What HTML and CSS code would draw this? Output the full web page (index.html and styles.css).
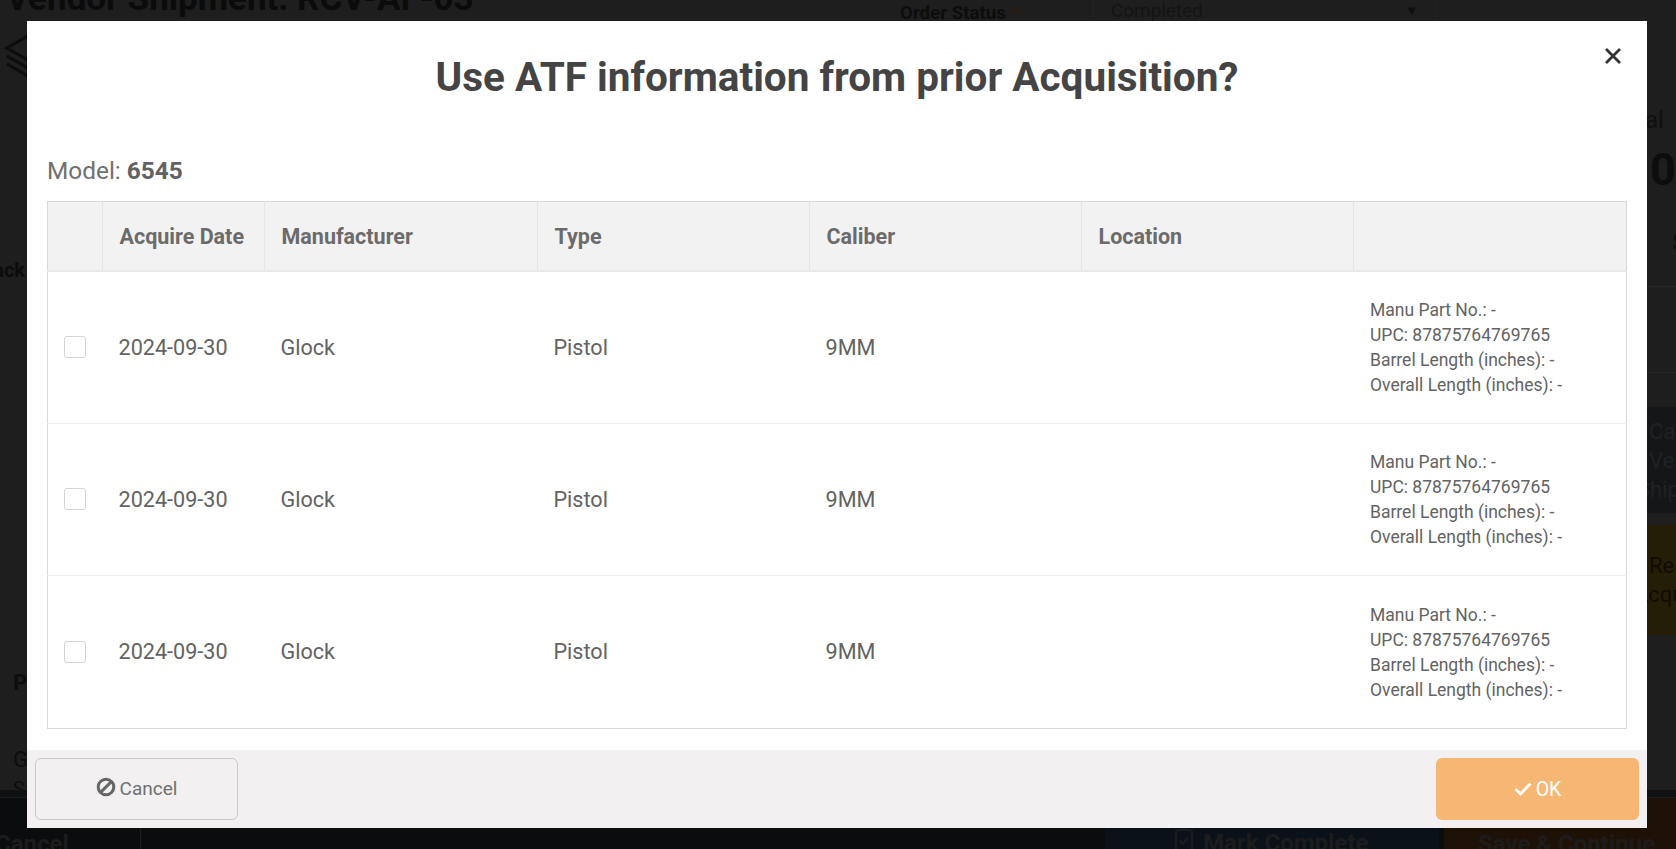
FILE: index.html
```html
<!DOCTYPE html>
<html lang="en">
<head>
<meta charset="utf-8">
<title>Use ATF information from prior Acquisition?</title>
<link rel="stylesheet" href="styles.css">
</head>
<body>
<div class="page">
  <header class="top">
    <h1 class="page-title">Vendor Shipment: RCV-AF-03</h1>
    <div class="status-label">Order Status <span class="req">*</span></div>
    <div class="status-select"><span>Completed</span><span class="caret">▼</span></div>
  </header>
  <div class="middle">
    <aside class="left-strip">
      <svg class="logo" width="24" height="44" viewBox="0 0 24 44" fill="none" stroke="#0c0c0c" stroke-width="3"><path d="M24 2 3 14l21 12M3 22l21 12M3 30l21 12"/></svg>
      <div class="l-back">ack</div>
      <div class="l-p">P</div>
      <div class="l-g">G</div>
      <div class="l-s">S</div>
    </aside>
    <aside class="right-strip">
      <div class="r-al">al</div>
      <div class="r-zero">0</div>
      <div class="r-s">S</div>
      <div class="r-rule first"></div>
      <div class="r-rule second"></div>
      <div class="r-btn dark"><span>Cancel</span><span>Vendor</span><span class="cut">Shipment</span></div>
      <div class="r-btn amber"><span>Record</span><span class="cut wide">Acquisition</span></div>
    </aside>
  </div>
  <footer class="bottom">
    <div class="bar">
      <div class="b-cancel">Cancel</div>
      <div class="b-gap"></div>
      <div class="b-mark"><svg class="mark-ico" width="18" height="24" viewBox="0 0 18 24" fill="none" stroke="#1c1c1c" stroke-width="2"><rect x="1" y="1" width="16" height="22" rx="2"/><path d="M5 12l3 3 5-6"/></svg><span>Mark Complete</span></div>
      <div class="b-save">Save &amp; Continue</div>
    </div>
  </footer>
</div>

<div class="modal" role="dialog">
  <div class="modal-head">
    <h2 class="modal-title">Use ATF information from prior Acquisition?</h2>
    <button class="close" aria-label="Close"><svg width="18" height="18" viewBox="0 0 18 18" stroke="#333" stroke-width="2.8" fill="none"><path d="M2 2 16 16M16 2 2 16"/></svg></button>
  </div>
  <div class="modal-body">
    <p class="model">Model: <b>6545</b></p>
    <table class="grid">
      <thead>
        <tr><th class="c0"></th><th class="c1">Acquire Date</th><th class="c2">Manufacturer</th><th class="c3">Type</th><th class="c3">Caliber</th><th class="c3">Location</th><th></th></tr>
      </thead>
      <tbody>
        <tr>
          <td class="chk"><span class="box"></span></td><td>2024-09-30</td><td>Glock</td><td>Pistol</td><td>9MM</td><td></td>
          <td class="info">Manu Part No.: -<br>UPC: 87875764769765<br>Barrel Length (inches): -<br>Overall Length (inches): -</td>
        </tr>
        <tr>
          <td class="chk"><span class="box"></span></td><td>2024-09-30</td><td>Glock</td><td>Pistol</td><td>9MM</td><td></td>
          <td class="info">Manu Part No.: -<br>UPC: 87875764769765<br>Barrel Length (inches): -<br>Overall Length (inches): -</td>
        </tr>
        <tr>
          <td class="chk"><span class="box"></span></td><td>2024-09-30</td><td>Glock</td><td>Pistol</td><td>9MM</td><td></td>
          <td class="info">Manu Part No.: -<br>UPC: 87875764769765<br>Barrel Length (inches): -<br>Overall Length (inches): -</td>
        </tr>
      </tbody>
    </table>
  </div>
  <div class="modal-foot">
    <button class="btn btn-cancel"><svg class="ban" width="20" height="20" viewBox="0 0 20 20" fill="none" stroke="#666" stroke-width="3"><circle cx="10" cy="10" r="7.8"/><path d="M4.6 15.4 15.4 4.6"/></svg><span>Cancel</span></button>
    <button class="btn btn-ok"><svg width="18" height="14" viewBox="0 0 18 14" fill="none" stroke="#fff" stroke-width="2.8"><path d="M1.5 7 6.5 12 16.5 1.5"/></svg><span>OK</span></button>
  </div>
</div>
</body>
</html>
```
FILE: styles.css
```css
* { box-sizing: border-box; }
html, body { margin: 0; height: 100%; overflow: hidden; }
body { font-family: Roboto, "Liberation Sans", sans-serif; background: #1e1e1e; color: #0d0d0d; }

/* dimmed page behind the dialog */
.page { height: 849px; display: flex; flex-direction: column; overflow: hidden; }
.top { height: 21px; flex: none; display: flex; align-items: flex-start; overflow: hidden; padding-left: 6px; }
.page-title { margin: -20px 0 0; width: 894px; flex: none; font-size: 35px; line-height: 38px; font-weight: 700; color: #0b0b0b; white-space: nowrap; }
.status-label { width: 193px; flex: none; font-size: 18.7px; font-weight: 700; line-height: 26px; }
.req { color: #2c1a08; }
.status-select { width: 344px; flex: none; height: 21px; display: flex; justify-content: space-between; padding: 0 18px 0 17px; border-left: 1px solid #232323; border-right: 1px solid #232323; font-size: 18.9px; line-height: 22px; color: #141414; }
.caret { font-size: 13px; color: #0f0f0f; }

.middle { flex: 1; display: flex; justify-content: space-between; min-height: 0; overflow: hidden; }
.left-strip { width: 27px; display: flex; flex-direction: column; overflow: hidden; font-size: 22px; }
.logo { margin: 13px 0 0 4px; flex: none; }
.l-back { margin-top: 180px; direction: rtl; font-size: 20px; font-weight: 700; line-height: 24px; padding-right: 2px; white-space: nowrap; color: #0c0c0c; flex: none; }
.l-p { margin: 389px 0 0 13px; font-weight: 700; line-height: 24px; flex: none; }
.l-g { margin: 53px 0 0 13px; line-height: 24px; flex: none; }
.l-s { margin: 7px 0 0 13px; font-size: 20px; line-height: 20px; flex: none; }

.right-strip { width: 29px; display: flex; flex-direction: column; overflow: hidden; white-space: nowrap; color: #101010; }
.r-al { margin: 87px 0 0 -2px; font-size: 24px; line-height: 24px; flex: none; }
.r-zero { margin: 14px 0 0 3px; font-size: 45px; line-height: 48px; font-weight: 700; color: #0d0d0d; flex: none; }
.r-s { margin: 37px 0 0 25px; font-size: 22px; line-height: 24px; flex: none; }
.r-rule { height: 1px; background: #262626; flex: none; }
.r-rule.first { margin-top: 31px; }
.r-rule.second { margin-top: 85px; }
.r-btn { display: flex; flex-direction: column; justify-content: center; flex: none; font-size: 22px; line-height: 29px; padding-left: 2px; overflow: hidden; }
.r-btn .cut { margin-left: -12px; }
.r-btn .cut.wide { margin-left: -15px; }
.r-btn.dark { margin-top: 34px; height: 106px; background: #141617; color: #1f2224; }
.r-btn.amber { margin-top: 12px; height: 110px; background: #251e06; color: #0f0c02; }

.bottom { height: 59px; flex: none; padding-top: 7px; background: #0f1012; overflow: hidden; }
.bar { height: 52px; display: flex; background: #0b0c0e; border-top: 1px solid #1c1d1f; font-size: 24px; font-weight: 700; color: #1c1c1c; line-height: 28px; white-space: nowrap; }
.b-cancel { width: 141px; padding: 32px 0 0; margin: 0; border-right: 1px solid #1d1e20; text-indent: -5px; overflow: hidden; }
.b-gap { width: 964px; flex: none; }
.b-mark { width: 334px; flex: none; background: #0a1118; padding: 31px 0 0 70px; display: flex; gap: 10px; align-items: flex-start; }
.mark-ico { flex: none; }
.b-save { margin-left: 5px; flex: 1; background: #1e1206; padding: 32px 0 0 34px; }

/* dialog */
.modal { position: fixed; left: 27px; top: 21px; width: 1620px; height: 807px; background: #fff; display: flex; flex-direction: column; color: #666; }
.modal-head { height: 135px; flex: none; display: flex; justify-content: center; position: relative; }
.modal-title { margin: 31px 0 0; font-size: 40.5px; line-height: 50px; font-weight: 700; color: #444; }
.close { position: absolute; right: 25px; top: 26px; width: 18px; height: 18px; padding: 0; border: 0; background: none; display: block; }
.close svg { display: block; }

.modal-body { flex: 1; padding: 0 20px; min-height: 0; }
.model { margin: 0; height: 45px; padding-top: 1px; font-size: 24.4px; line-height: 28px; color: #707070; }
.model b { font-weight: 700; color: #626262; }

.grid { width: 1580px; border-collapse: collapse; table-layout: fixed; border: 1px solid #d8d8d8; font-size: 21.6px; }
.grid th { height: 69px; background: #f3f2f3; border-right: 1px solid #e6e5e6; border-bottom: 2px solid #e8e8e8; text-align: left; padding: 2px 16px 0 16.5px; font-weight: 700; color: #6b6b6b; font-size: 21.5px; }
.grid th:last-child { border-right: 0; }
.grid .c0 { width: 55px; }
.grid .c1 { width: 162px; }
.grid .c2 { width: 273px; }
.grid .c3 { width: 272px; }
.grid td { height: 152.5px; padding: 0 16px; border-top: 1px solid #eee; color: #636363; }
.grid tbody tr:first-child td { border-top: 0; }
.chk { padding: 0 0 0 16px !important; }
.box { display: block; width: 22px; height: 22px; margin-top: 1px; margin-bottom: 1px; border: 1px solid #d4d4d4; border-radius: 3px; background: #fff; }
.grid .info { font-size: 17.5px; line-height: 25px; white-space: nowrap; padding: 2px 16px 0 16.5px; }

.modal-foot { height: 78px; flex: none; background: #f2f0f1; display: flex; justify-content: space-between; align-items: center; padding: 0 8px 0 8px; }
.btn { width: 203px; height: 62px; border-radius: 6px; font-family: inherit; font-size: 19.5px; display: flex; align-items: center; justify-content: center; gap: 4px; padding: 0; }
.btn-cancel { background: #f2f0f1; border: 1px solid #c9c9c9; color: #707070; font-size: 19px; padding-bottom: 1px; }
.btn-ok { background: #f7b774; border: 0; color: #fff; }
.ban { margin-top: -4px; }
```
